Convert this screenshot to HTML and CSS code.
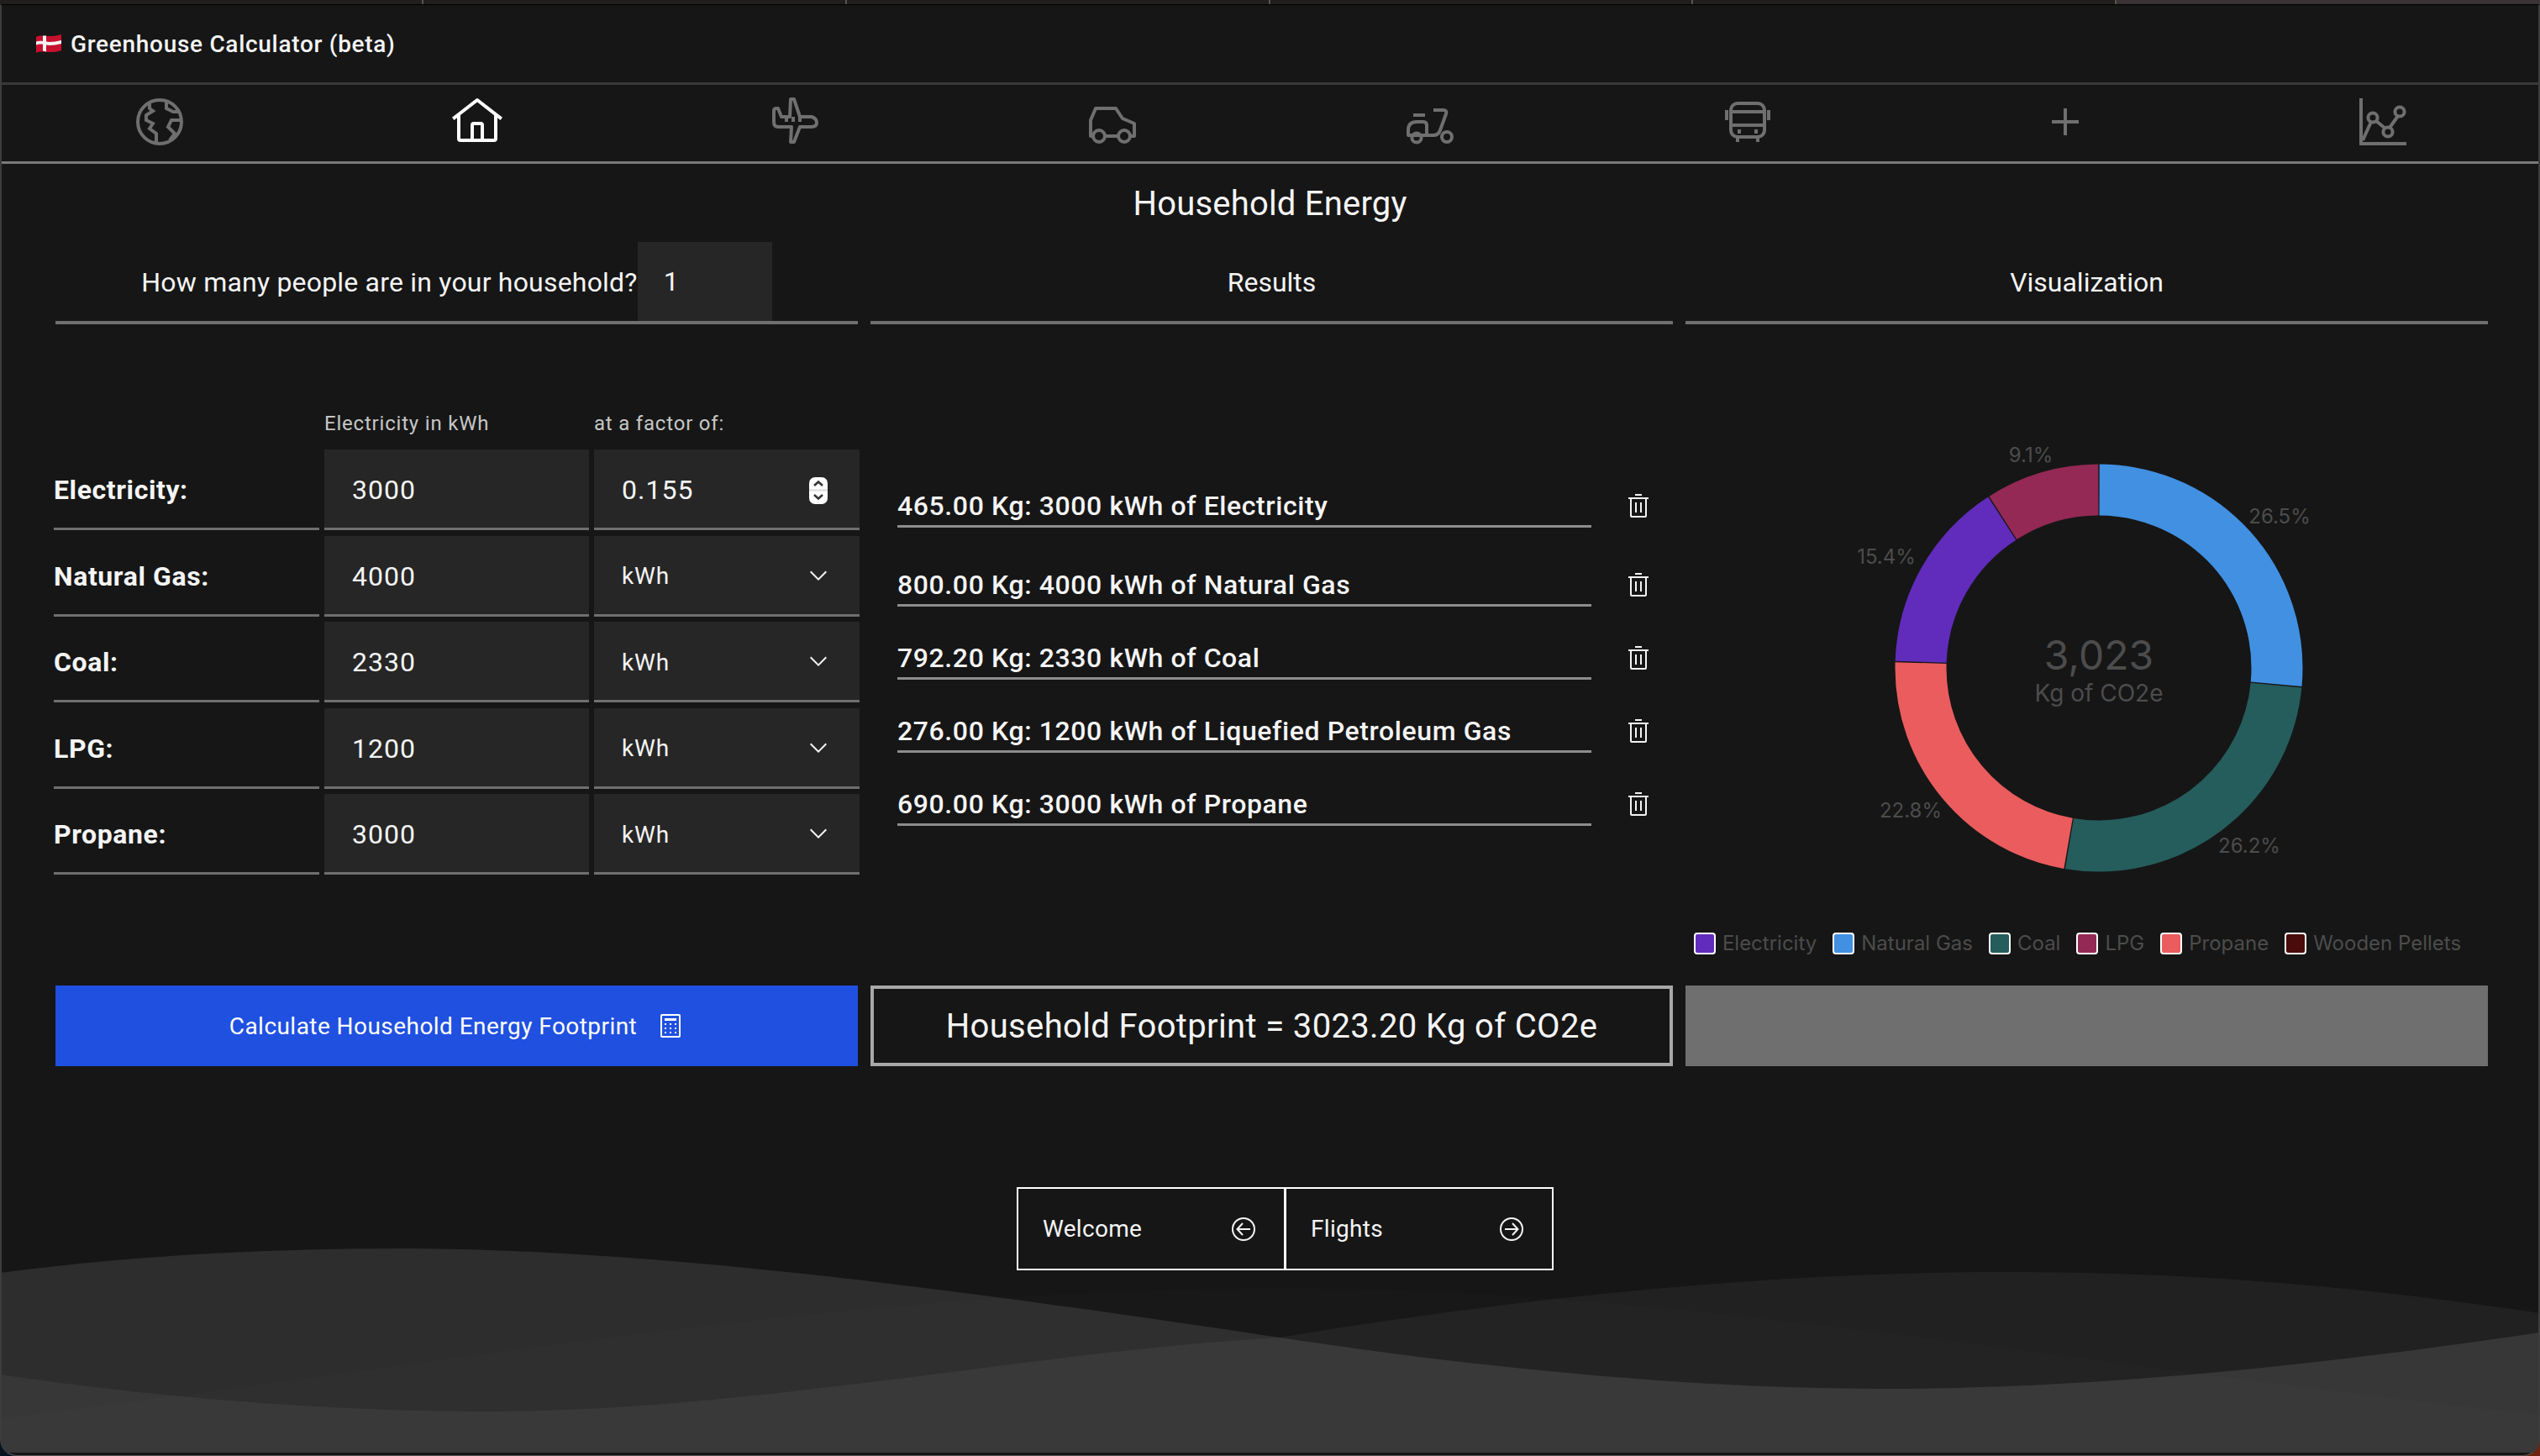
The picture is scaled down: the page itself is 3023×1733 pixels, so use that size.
FILE: index.html
```html
<!DOCTYPE html>
<html lang="en">
<head>
  <meta charset="UTF-8">
  <title>Greenhouse Calculator (beta)</title>
  <link rel="stylesheet" href="styles.css">
</head>
<body>
  <div class="tab-strip">
    <span></span><span></span><span></span><span></span><span></span><span class="tab-strip-active"></span>
  </div>
  <div class="window">
    <svg class="waves" viewBox="0 0 3023 250" width="3023" height="250">
      <path fill="#fff" fill-opacity="0.1" d="M0 36C160 15 320 7 477 7C800 7 1200 65 1523 113C1750 147 2000 174 2241 174C2520 174 2800 140 3023 107V250H0Z"/>
      <path fill="#fff" fill-opacity="0.05" d="M0 157C190 185 390 201 582 201C900 201 1220 130 1523 113C1800 67 2100 35 2388 35C2620 35 2830 55 3023 84V250H0Z"/>
      <path fill="#fff" fill-opacity="0.012" d="M0 209C500 150 1000 54 1529 54C2000 54 2500 150 3023 205V250H0Z"/>
    </svg>

    <header class="title-bar">
      <svg class="flag" viewBox="0 0 32 24" width="32" height="24">
        <path fill="#c8102e" d="M1 4C8 0 14 6 31 1V20C16 25 8 19 1 23Z"/>
        <path fill="#f4f4f4" d="M9 2.4H13V9.6C18 10.4 24 9.6 31 8V12C24 13.6 18 14.4 13 13.6V21.4L9 20.6V12.8C6 12.4 3 12.6 1 13.4V9.6C3 8.8 6 8.6 9 9Z"/>
      </svg>
      <span>Greenhouse Calculator (beta)</span>
    </header>

    <nav class="icon-nav">
      <a class="nav-tab">
        <svg viewBox="0 0 32 32" width="64" height="64" fill="none" stroke="currentColor" stroke-width="2">
          <circle cx="16" cy="16" r="13"/>
          <path d="M10 4.5V8L12 9.5L8 12V15L12 17L10 20L14 23V29"/>
          <path d="M20 3.5V8L24 10H28M29 15H23L21 19L25 23L22 27"/>
        </svg>
      </a>
      <a class="nav-tab nav-tab-active">
        <svg viewBox="0 0 32 32" width="64" height="64" fill="currentColor">
          <path d="M16.6123,2.2138a1.01,1.01,0,0,0-1.2427,0L1,13.4194l1.2427,1.5717L4,13.6209V26a2.0041,2.0041,0,0,0,2,2H26a2.0037,2.0037,0,0,0,2-2V13.63L29.7573,15,31,13.4282ZM18,26H14V18h4Zm2,0V18a2.0023,2.0023,0,0,0-2-2H14a2.002,2.002,0,0,0-2,2v8H6V12.0615l10-7.79,10,7.8005V26Z"/>
        </svg>
      </a>
      <a class="nav-tab">
        <svg viewBox="0 0 32 32" width="64" height="64" fill="none" stroke="currentColor" stroke-width="2" stroke-linejoin="round">
          <path d="M13 13L13.5 2.5H15.5L19 13H26Q29 14 29 16.5Q29 19 26 19H19L15.5 28H13.5L14 19H6Q3.5 19 3.5 16V9.5Q3.5 8 5 8H6L8 13Z"/>
          <path d="M11 13V16M15 13V16M19 13V16"/>
        </svg>
      </a>
      <a class="nav-tab">
        <svg viewBox="0 0 32 32" width="64" height="64" fill="none" stroke="currentColor" stroke-width="2" stroke-linejoin="round">
          <path d="M4.5 24.5H3V15L6 8H18L22 14L29 17V24.5H26.5M11.5 24.5H19.5"/>
          <circle cx="8" cy="24.5" r="3.5"/>
          <circle cx="23" cy="24.5" r="3.5"/>
        </svg>
      </a>
      <a class="nav-tab">
        <svg viewBox="0 0 32 32" width="64" height="64" fill="none" stroke="currentColor" stroke-width="2" stroke-linejoin="round">
          <path d="M18 9H24Q26 9 25.6 11L22 21Q21 24 18 24H3V21Q3 16 8 16H12Q14 16 14 18V23"/>
          <path d="M6 12H13"/>
          <circle cx="8" cy="25.5" r="2.8"/>
          <circle cx="26" cy="25" r="3"/>
        </svg>
      </a>
      <a class="nav-tab">
        <svg viewBox="0 0 32 32" width="64" height="64" fill="none" stroke="currentColor" stroke-width="2" stroke-linejoin="round">
          <rect x="6" y="5" width="20" height="20" rx="4"/>
          <path d="M6 10H26M6 18H26M10 25V28M22 25V28M11 20.5V23M21 20.5V23M3.5 9V15M28.5 9V15"/>
        </svg>
      </a>
      <a class="nav-tab">
        <svg viewBox="0 0 32 32" width="64" height="64" fill="currentColor">
          <path d="M17 15V8H15V15H8V17H15V24H17V17H24V15H17Z"/>
        </svg>
      </a>
      <a class="nav-tab">
        <svg viewBox="0 0 32 32" width="64" height="64" fill="none" stroke="currentColor" stroke-width="2">
          <path d="M3 2V29H30"/>
          <circle cx="10" cy="13.5" r="2.8"/>
          <circle cx="19" cy="22" r="2.8"/>
          <circle cx="26" cy="10" r="2.8"/>
          <path d="M4 27L9 16M12 15.5L17.5 20M20 19.5L25 12.5"/>
        </svg>
      </a>
    </nav>

    <main class="content">
      <h2 class="page-title">Household Energy</h2>

      <div class="columns">
        <div class="col-head col-head-people">
          <label for="people">How many people are in your household?</label>
          <input class="people-input" id="people" type="text" value="1">
        </div>
        <div class="col-head">Results</div>
        <div class="col-head">Visualization</div>

        <section class="form-col">
          <div class="form-caption">
            <span></span>
            <span>Electricity in kWh</span>
            <span>at a factor of:</span>
          </div>
          <div class="form-rows">
            <div class="form-label">Electricity:</div>
            <input class="field" type="text" value="3000">
            <div class="field-wrap">
              <input class="field" type="text" value="0.155">
              <svg class="spinner" viewBox="0 0 22 32" width="22" height="32">
                <rect width="22" height="32" rx="7" fill="#fff"/>
                <path d="M0 15.5H22" stroke="#d8d8d8" stroke-width="2"/>
                <path d="M6 10L11 5.5L16 10M6 21L11 25.5L16 21" fill="none" stroke="#333" stroke-width="2.5"/>
              </svg>
            </div>

            <div class="form-label">Natural Gas:</div>
            <input class="field" type="text" value="4000">
            <div class="field-wrap">
              <select class="field field-select"><option>kWh</option></select>
              <svg class="chevron" viewBox="0 0 16 16" width="32" height="32" fill="currentColor"><path d="M8 11L3 6l.7-.7L8 9.6l4.3-4.3.7.7z"/></svg>
            </div>

            <div class="form-label">Coal:</div>
            <input class="field" type="text" value="2330">
            <div class="field-wrap">
              <select class="field field-select"><option>kWh</option></select>
              <svg class="chevron" viewBox="0 0 16 16" width="32" height="32" fill="currentColor"><path d="M8 11L3 6l.7-.7L8 9.6l4.3-4.3.7.7z"/></svg>
            </div>

            <div class="form-label">LPG:</div>
            <input class="field" type="text" value="1200">
            <div class="field-wrap">
              <select class="field field-select"><option>kWh</option></select>
              <svg class="chevron" viewBox="0 0 16 16" width="32" height="32" fill="currentColor"><path d="M8 11L3 6l.7-.7L8 9.6l4.3-4.3.7.7z"/></svg>
            </div>

            <div class="form-label">Propane:</div>
            <input class="field" type="text" value="3000">
            <div class="field-wrap">
              <select class="field field-select"><option>kWh</option></select>
              <svg class="chevron" viewBox="0 0 16 16" width="32" height="32" fill="currentColor"><path d="M8 11L3 6l.7-.7L8 9.6l4.3-4.3.7.7z"/></svg>
            </div>
          </div>
        </section>

        <section class="results-col">
          <div class="result-row">
            <span class="result-text">465.00 Kg: 3000 kWh of Electricity</span>
            <svg class="trash" viewBox="0 0 32 32" width="32" height="32" fill="currentColor"><path d="M12 12h2v12h-2zM18 12h2v12h-2zM4 6v2h2v20a2 2 0 0 0 2 2h16a2 2 0 0 0 2-2V8h2V6zm4 22V8h16v20zM12 2h8v2h-8z"/></svg>
          </div>
          <div class="result-row">
            <span class="result-text">800.00 Kg: 4000 kWh of Natural Gas</span>
            <svg class="trash" viewBox="0 0 32 32" width="32" height="32" fill="currentColor"><path d="M12 12h2v12h-2zM18 12h2v12h-2zM4 6v2h2v20a2 2 0 0 0 2 2h16a2 2 0 0 0 2-2V8h2V6zm4 22V8h16v20zM12 2h8v2h-8z"/></svg>
          </div>
          <div class="result-row">
            <span class="result-text">792.20 Kg: 2330 kWh of Coal</span>
            <svg class="trash" viewBox="0 0 32 32" width="32" height="32" fill="currentColor"><path d="M12 12h2v12h-2zM18 12h2v12h-2zM4 6v2h2v20a2 2 0 0 0 2 2h16a2 2 0 0 0 2-2V8h2V6zm4 22V8h16v20zM12 2h8v2h-8z"/></svg>
          </div>
          <div class="result-row">
            <span class="result-text">276.00 Kg: 1200 kWh of Liquefied Petroleum Gas</span>
            <svg class="trash" viewBox="0 0 32 32" width="32" height="32" fill="currentColor"><path d="M12 12h2v12h-2zM18 12h2v12h-2zM4 6v2h2v20a2 2 0 0 0 2 2h16a2 2 0 0 0 2-2V8h2V6zm4 22V8h16v20zM12 2h8v2h-8z"/></svg>
          </div>
          <div class="result-row">
            <span class="result-text">690.00 Kg: 3000 kWh of Propane</span>
            <svg class="trash" viewBox="0 0 32 32" width="32" height="32" fill="currentColor"><path d="M12 12h2v12h-2zM18 12h2v12h-2zM4 6v2h2v20a2 2 0 0 0 2 2h16a2 2 0 0 0 2-2V8h2V6zm4 22V8h16v20zM12 2h8v2h-8z"/></svg>
          </div>
        </section>

        <section class="chart-col">
          <svg class="donut" viewBox="0 0 955 560" width="955" height="560">
            <g fill="none" stroke-width="61" transform="rotate(-90 492 296)">
              <circle cx="492" cy="296" r="212" pathLength="100" stroke="#4190e2" stroke-dasharray="26.4 73.6" stroke-dashoffset="-0.05"/>
              <circle cx="492" cy="296" r="212" pathLength="100" stroke="#255c5c" stroke-dasharray="26.1 73.9" stroke-dashoffset="-26.55"/>
              <circle cx="492" cy="296" r="212" pathLength="100" stroke="#ea5c5e" stroke-dasharray="22.7 77.3" stroke-dashoffset="-52.75"/>
              <circle cx="492" cy="296" r="212" pathLength="100" stroke="#612cbb" stroke-dasharray="15.3 84.7" stroke-dashoffset="-75.55"/>
              <circle cx="492" cy="296" r="212" pathLength="100" stroke="#932954" stroke-dasharray="9 91" stroke-dashoffset="-90.95"/>
            </g>
            <g class="donut-labels">
              <text x="707" y="115">26.5%</text>
              <text x="671" y="507">26.2%</text>
              <text x="268" y="465">22.8%</text>
              <text x="239" y="163">15.4%</text>
              <text x="411" y="42">9.1%</text>
            </g>
            <text class="donut-total" x="492" y="280">3,023</text>
            <text class="donut-unit" x="492" y="326">Kg of CO2e</text>
          </svg>
          <ul class="legend">
            <li><i class="swatch swatch-electricity"></i>Electricity</li>
            <li><i class="swatch swatch-gas"></i>Natural Gas</li>
            <li><i class="swatch swatch-coal"></i>Coal</li>
            <li><i class="swatch swatch-lpg"></i>LPG</li>
            <li><i class="swatch swatch-propane"></i>Propane</li>
            <li><i class="swatch swatch-wood"></i>Wooden Pellets</li>
          </ul>
        </section>

        <button class="calc-button">
          <span>Calculate Household Energy Footprint</span>
          <svg viewBox="0 0 32 32" width="32" height="32" fill="currentColor"><path d="M26 4v24H6V4h20m0-2H6a2 2 0 0 0-2 2v24a2 2 0 0 0 2 2h20a2 2 0 0 0 2-2V4a2 2 0 0 0-2-2zM9 23h2v2H9zM21 23h2v2h-2zM9 18h2v2H9zM21 18h2v2h-2zM9 13h2v2H9zM15 23h2v2h-2zM15 18h2v2h-2zM21 13h2v2h-2zM15 13h2v2h-2zM9 7h14v3H9z"/></svg>
        </button>
        <div class="footprint-box">Household Footprint = 3023.20 Kg of CO2e</div>
        <div class="disabled-box"></div>
      </div>

      <div class="pager">
        <a class="pager-link">
          <span>Welcome</span>
          <svg viewBox="0 0 32 32" width="32" height="32" fill="none" stroke="currentColor" stroke-width="2"><circle cx="16" cy="16" r="13"/><path d="M15 9L8.5 16L15 23M9 16H24"/></svg>
        </a>
        <a class="pager-link">
          <span>Flights</span>
          <svg viewBox="0 0 32 32" width="32" height="32" fill="none" stroke="currentColor" stroke-width="2"><circle cx="16" cy="16" r="13"/><path d="M17 9L23.5 16L17 23M23 16H8"/></svg>
        </a>
      </div>
    </main>
  </div>
</body>
</html>
```
FILE: styles.css
```css
* {
  box-sizing: border-box;
}
body {
  margin: 0;
  height: 1733px;
  overflow: hidden;
  background: linear-gradient(90deg, #08141f 0, #08141f 50%, #6d2410 100%);
  font-family: Roboto, "Liberation Sans", sans-serif;
  color: #f4f4f4;
}
.tab-strip {
  display: grid;
  grid-template-columns: repeat(6, 1fr);
  height: 5px;
  background: #201f1e;
}
.tab-strip span {
  border-right: 2px solid #55534f;
}
.tab-strip .tab-strip-active {
  background: #3a3335;
  border-right: 0;
}
.window {
  position: relative;
  height: 1728px;
  background: #161616;
  border: 2px solid #3d3d3d;
  border-top: 1px solid #000;
  border-bottom: 1px solid #555;
  border-radius: 0 0 20px 20px;
  overflow: hidden;
}
.waves {
  position: absolute;
  left: -2px;
  bottom: 3px;
  display: block;
}

/* top */
.title-bar {
  display: flex;
  align-items: center;
  gap: 10px;
  height: 95px;
  padding-left: 40px;
  border-bottom: 3px solid #393939;
  font-size: 28px;
  font-weight: 500;
  letter-spacing: 0.7px;
}
.flag {
  flex: none;
  margin-top: -1px;
}
.icon-nav {
  display: grid;
  grid-template-columns: repeat(8, 1fr);
  height: 94px;
  margin: 0 -4px 0 -1px;
  padding-bottom: 3px;
  border-bottom: 3px solid #7a7a7a;
}
.nav-tab {
  display: flex;
  align-items: center;
  justify-content: center;
  color: #6f6f6f;
}
.nav-tab-active {
  color: #fff;
}

/* main */
.content {
  position: relative;
}
.page-title {
  margin: 0;
  height: 93px;
  padding-top: 23px;
  text-align: center;
  font-size: 40px;
  line-height: 50px;
  font-weight: 400;
  letter-spacing: 0.2px;
}
.columns {
  display: grid;
  grid-template-columns: repeat(3, 955px);
  grid-template-rows: 98px 787px 96px;
  column-gap: 15px;
  padding-left: 64px;
}
.col-head {
  display: flex;
  align-items: center;
  justify-content: center;
  border-bottom: 4px solid #6f6f6f;
  font-size: 32px;
  padding-top: 2px;
}
.col-head-people {
  padding-top: 0;
  align-items: stretch;
  justify-content: center;
  letter-spacing: 0.2px;
}
.col-head-people label {
  align-self: center;
  padding-top: 2px;
}
.people-input {
  width: 160px;
  padding: 0 31px;
  border: 0;
  outline: 0;
  background: #262626;
  color: #f4f4f4;
  font: inherit;
  font-size: 32px;
}

/* form */
.form-col {
  padding-top: 104px;
  margin: 0 -2px;
}
.form-caption {
  display: grid;
  grid-template-columns: 316px 315px 316px;
  gap: 6px;
  height: 45px;
  font-size: 24px;
  color: #c6c6c6;
  letter-spacing: 0.8px;
}
.form-rows {
  display: grid;
  grid-template-columns: 316px 315px 316px;
  grid-auto-rows: 96px;
  column-gap: 6px;
  row-gap: 6.5px;
}
.form-label {
  display: flex;
  align-items: center;
  padding-top: 3px;
  border-bottom: 3px solid #6f6f6f;
  font-size: 32px;
  font-weight: 700;
  letter-spacing: 0.6px;
}
.field {
  display: block;
  width: 100%;
  height: 100%;
  padding: 3px 32px 0 33px;
  border: 0;
  border-bottom: 3px solid #6f6f6f;
  border-radius: 0;
  outline: 0;
  background: #262626;
  color: #f4f4f4;
  font: inherit;
  font-size: 32px;
  letter-spacing: 1px;
}
.field-select {
  appearance: none;
  font-size: 28px;
  letter-spacing: 0.8px;
}
.field-wrap {
  position: relative;
}
.chevron {
  position: absolute;
  right: 33px;
  top: 31px;
}
.spinner {
  position: absolute;
  right: 38px;
  top: 33px;
}

/* results */
.results-col {
  display: flex;
  flex-direction: column;
  gap: 29px;
  padding: 184px 0 0 32px;
}
.result-row {
  display: flex;
  align-items: center;
  height: 58px;
}
.result-row:first-child {
  margin-bottom: 7px;
}
.result-text {
  width: 826px;
  height: 58px;
  line-height: 65px;
  border-bottom: 3px solid #8d8d8d;
  font-size: 32px;
  font-weight: 500;
  letter-spacing: 0.6px;
  white-space: nowrap;
}
.trash {
  margin-left: 40px;
  margin-top: 6px;
}

/* chart */
.chart-col {
  padding-top: 113px;
}
.donut {
  display: block;
}
.donut text {
  font-family: Inter, "Liberation Sans", sans-serif;
  text-anchor: middle;
  dominant-baseline: central;
  fill: #4c4c4c;
}
.donut-labels text {
  font-size: 24px;
}
.donut .donut-total {
  font-size: 48px;
}
.donut .donut-unit {
  font-size: 28px;
}
.legend {
  display: flex;
  justify-content: center;
  gap: 19px;
  margin: 50px 0 0;
  padding: 0 22px 0 0;
  list-style: none;
  font-family: Inter, "Liberation Sans", sans-serif;
  font-size: 24px;
  line-height: 28px;
  color: #4c4c4c;
  white-space: nowrap;
}
.legend li {
  display: flex;
  align-items: center;
  gap: 8px;
}
.swatch {
  width: 26px;
  height: 26px;
  border: 2px solid #fff;
  border-radius: 4px;
}
.swatch-electricity { background: #612cbb; }
.swatch-gas { background: #4190e2; }
.swatch-coal { background: #255c5c; }
.swatch-lpg { background: #932954; }
.swatch-propane { background: #ea5c5e; }
.swatch-wood { background: #4a0b0b; }

/* bottom row */
.calc-button {
  display: flex;
  align-items: center;
  justify-content: center;
  gap: 24px;
  border: 0;
  background: #2050e0;
  color: #fff;
  font: inherit;
  font-size: 28px;
  letter-spacing: 0.45px;
}
.footprint-box {
  display: flex;
  align-items: center;
  justify-content: center;
  border: 4px solid #a8a8a8;
  font-size: 40px;
  letter-spacing: 0.35px;
}
.disabled-box {
  background: #6f6f6f;
}
.pager {
  display: flex;
  justify-content: center;
  padding-left: 35px;
  margin-top: 144px;
}
.pager-link {
  display: flex;
  align-items: center;
  justify-content: space-between;
  width: 320px;
  height: 99px;
  margin-right: -1px;
  padding: 0 32px 0 29px;
  border: 2px solid #fff;
  font-size: 28px;
  letter-spacing: 0.3px;
}
```
